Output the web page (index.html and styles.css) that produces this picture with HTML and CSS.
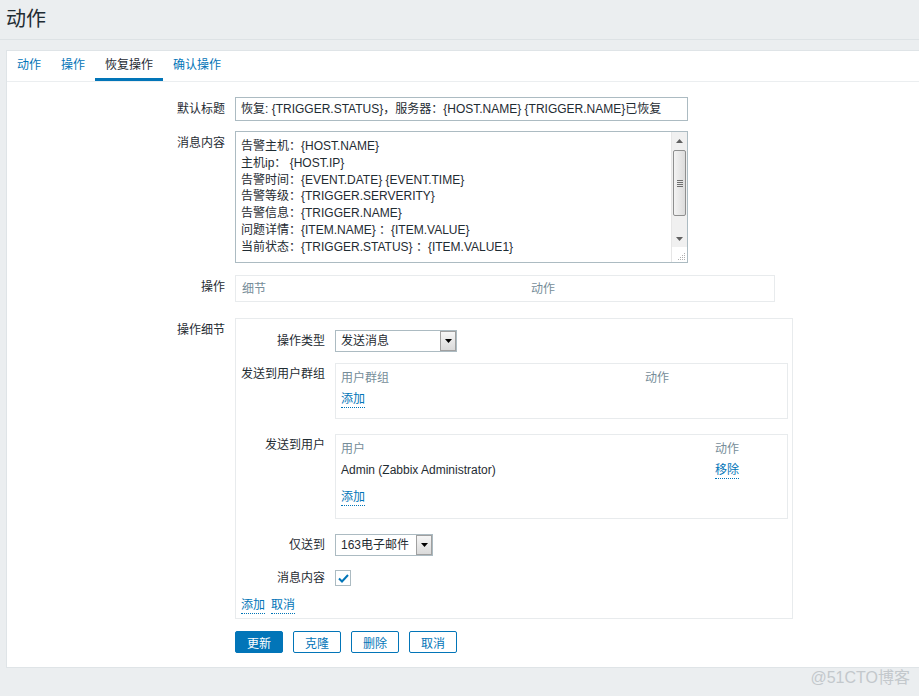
FILE: index.html
```html
<!DOCTYPE html>
<html lang="zh-CN">
<head>
<meta charset="utf-8">
<title>动作</title>
<link rel="stylesheet" href="styles.css">
</head>
<body>
<header class="page-header"><h1 class="page-title">动作</h1></header>
<main class="panel">
  <nav class="tabs">
    <a class="tab">动作</a>
    <a class="tab">操作</a>
    <a class="tab active">恢复操作</a>
    <a class="tab">确认操作</a>
  </nav>
  <div class="form">
    <div class="row row-title">
      <div class="label">默认标题</div>
      <div class="field"><div class="input input-title">恢复: {TRIGGER.STATUS}，服务器：{HOST.NAME} {TRIGGER.NAME}已恢复</div></div>
    </div>
    <div class="row row-msg">
      <div class="label">消息内容</div>
      <div class="field">
        <div class="textarea">
          <div class="ta-text">
            <div>告警主机：{HOST.NAME}</div>
            <div>主机ip： {HOST.IP}</div>
            <div>告警时间：{EVENT.DATE} {EVENT.TIME}</div>
            <div>告警等级：{TRIGGER.SERVERITY}</div>
            <div>告警信息：{TRIGGER.NAME}</div>
            <div>问题详情：{ITEM.NAME} ：{ITEM.VALUE}</div>
            <div>当前状态：{TRIGGER.STATUS} ：{ITEM.VALUE1}</div>
            <div>事件ID：{EVENT.ID}</div>
          </div>
          <div class="scrollbar">
            <div class="sb-btn sb-up"><svg width="7" height="4" viewBox="0 0 7 4"><path d="M0 4 L3.5 0 L7 4 Z" fill="#606060"/></svg></div>
            <div class="sb-track">
              <div class="sb-thumb"><span></span><span></span><span></span><span></span></div>
            </div>
            <div class="sb-btn sb-down"><svg width="7" height="4" viewBox="0 0 7 4"><path d="M0 0 L3.5 4 L7 0 Z" fill="#606060"/></svg></div>
            <div class="sb-corner"><svg width="8" height="8" viewBox="0 0 8 8"><g fill="#b0b0b0"><rect x="6" y="0" width="1" height="1"/><rect x="4" y="2" width="1" height="1"/><rect x="6" y="2" width="1" height="1"/><rect x="2" y="4" width="1" height="1"/><rect x="4" y="4" width="1" height="1"/><rect x="6" y="4" width="1" height="1"/><rect x="0" y="6" width="1" height="1"/><rect x="2" y="6" width="1" height="1"/><rect x="4" y="6" width="1" height="1"/><rect x="6" y="6" width="1" height="1"/></g></svg></div>
          </div>
        </div>
      </div>
    </div>
    <div class="row row-ops">
      <div class="label">操作</div>
      <div class="field">
        <div class="box ops-box">
          <div class="th-row"><span class="th col-detail">细节</span><span class="th">动作</span></div>
        </div>
      </div>
    </div>
    <div class="row row-details">
      <div class="label">操作细节</div>
      <div class="field">
        <div class="box details-box">
          <div class="irow irow-type">
            <div class="ilabel">操作类型</div>
            <div class="select select-type"><span class="sel-text">发送消息</span><span class="sel-btn"><svg width="7" height="4" viewBox="0 0 7 4"><path d="M0 0 L3.5 4 L7 0 Z" fill="#000"/></svg></span></div>
          </div>
          <div class="irow irow-groups">
            <div class="ilabel">发送到用户群组</div>
            <div class="box sub-box groups-box">
              <div class="th-row"><span class="th col-group">用户群组</span><span class="th">动作</span></div>
              <div class="tr add-row"><a class="link">添加</a></div>
            </div>
          </div>
          <div class="irow irow-users">
            <div class="ilabel">发送到用户</div>
            <div class="box sub-box users-box">
              <div class="th-row"><span class="th col-user">用户</span><span class="th">动作</span></div>
              <div class="tr user-row"><span class="col-user">Admin (Zabbix Administrator)</span><a class="link">移除</a></div>
              <div class="tr add-row add-user"><a class="link">添加</a></div>
            </div>
          </div>
          <div class="irow irow-media">
            <div class="ilabel">仅送到</div>
            <div class="select select-media"><span class="sel-text">163电子邮件</span><span class="sel-btn"><svg width="7" height="4" viewBox="0 0 7 4"><path d="M0 0 L3.5 4 L7 0 Z" fill="#000"/></svg></span></div>
          </div>
          <div class="irow irow-check">
            <div class="ilabel">消息内容</div>
            <div class="checkbox"><svg width="11" height="9" viewBox="0 0 11 9"><path d="M1 4.5 L4 7.5 L10 1" fill="none" stroke="#0275b8" stroke-width="2"/></svg></div>
          </div>
          <div class="detail-links"><a class="link">添加</a><a class="link">取消</a></div>
        </div>
      </div>
    </div>
    <div class="buttons">
      <button class="btn btn-primary">更新</button>
      <button class="btn">克隆</button>
      <button class="btn">删除</button>
      <button class="btn">取消</button>
    </div>
  </div>
</main>
<div class="watermark">@51CTO博客</div>
</body>
</html>
```
FILE: styles.css
```css
* { box-sizing: border-box; }
html, body { margin: 0; padding: 0; }
body {
  background: #ebeef0;
  font-family: "Liberation Sans", "Noto Sans CJK SC", sans-serif;
  font-size: 12px;
  color: #1f2c33;
  width: 919px;
  height: 696px;
  overflow: hidden;
  position: relative;
}
.page-header {
  height: 40px;
  border-bottom: 1px solid #dde2e5;
  padding-left: 6px;
}
.page-title {
  margin: 0;
  font-weight: normal;
  font-size: 20px;
  line-height: 39px;
}
.panel {
  margin: 10px 0 0 6px;
  background: #fff;
  border: 1px solid #dfe4e7;
  border-right: none;
  height: 618px;
}
.tabs {
  display: flex;
  height: 31px;
  border-bottom: 1px solid #ebeef0;
}
.tab {
  padding: 0 10px;
  height: 30px;
  line-height: 28px;
  color: #0275b8;
  border-bottom: 3px solid transparent;
}
.tab.active {
  color: #1f2c33;
  border-bottom-color: #0275b8;
}
.form { padding-top: 15px; }
.row { display: flex; align-items: flex-start; }
.label {
  width: 218px;
  text-align: right;
  line-height: 24px;
  flex: none;
}
.field { margin-left: 10px; }
.row-msg { margin-top: 10px; }
.row-ops { margin-top: 12px; }
.row-details { margin-top: 16px; }
.input {
  border: 1px solid #acbbc2;
  height: 24px;
  line-height: 22px;
  padding: 0 5px;
  white-space: nowrap;
}
.input-title { width: 453px; }
.textarea {
  width: 453px;
  height: 132px;
  border: 1px solid #acbbc2;
  display: flex;
  align-items: flex-start;
  overflow: hidden;
}
.ta-text {
  flex: 1;
  height: 125px;
  padding: 6px 5px 0;
  line-height: 16.8px;
  overflow: hidden;
  white-space: nowrap;
}
.scrollbar {
  width: 16px;
  height: 130px;
  flex: none;
  display: flex;
  flex-direction: column;
  background: #f0f0f0;
  border-left: 1px solid #e6e6e6;
}
.sb-btn {
  height: 17px;
  display: flex;
  align-items: center;
  justify-content: center;
}
.sb-track { height: 82px; padding: 1px 0; }
.sb-thumb {
  height: 66px;
  margin: 0 1px;
  border: 1px solid #8e8f8f;
  border-radius: 2px;
  background: linear-gradient(to right, #f3f3f3, #dcdcdc);
  display: flex;
  flex-direction: column;
  align-items: center;
  justify-content: center;
  gap: 1px;
}
.sb-thumb span { width: 6px; height: 1px; background: #707070; }
.sb-down { height: 16px; }
.sb-corner {
  flex: 1;
  background: #fff;
  display: flex;
  align-items: flex-end;
  justify-content: flex-end;
  padding: 0 1px 1px 0;
}
.box { border: 1px solid #e8ebed; }
.ops-box {
  width: 540px;
  height: 27px;
  padding: 3px 6px 0;
}
.th-row { display: flex; line-height: 20px; }
.th { color: #768d99; }
.col-detail { width: 289px; }
.details-box {
  width: 558px;
  height: 301px;
  padding: 11px 4px 0 5px;
}
.irow { display: flex; align-items: flex-start; }
.ilabel {
  width: 84px;
  flex: none;
  text-align: right;
  line-height: 22px;
  margin-right: 10px;
  white-space: nowrap;
}
.select {
  height: 22px;
  border: 1px solid #acbbc2;
  display: flex;
  align-items: stretch;
}
.sel-text { flex: 1; padding-left: 5px; line-height: 21px; white-space: nowrap; }
.sel-btn {
  width: 16px;
  border: 1px solid #a0a0a0;
  background: linear-gradient(#f6f6f6, #dadada);
  display: flex;
  align-items: center;
  justify-content: center;
}
.select-type { width: 122px; }
.select-media { width: 98px; }
.irow-groups { margin-top: 11px; }
.irow-users { margin-top: 15px; }
.irow-media { margin-top: 15px; }
.irow-check { margin-top: 11px; }
.sub-box {
  width: 453px;
  padding: 4px 5px 0;
}
.groups-box { height: 56px; }
.users-box { height: 85px; }
.col-group { width: 304px; }
.col-user { width: 374px; }
.tr { display: flex; line-height: 20px; }
.groups-box .add-row { margin-top: 3px; }
.user-row { margin-top: 1px; }
.add-user { margin-top: 9px; }
.link {
  color: #0275b8;
  border-bottom: 1px dotted #0275b8;
  line-height: 16px;
  display: inline-block;
  align-self: center;
}
.checkbox {
  margin-top: 3px;
  width: 16px;
  height: 16px;
  border: 1px solid #acbbc2;
  display: flex;
  align-items: center;
  justify-content: center;
}
.detail-links {
  margin-top: 8px;
  display: flex;
  gap: 6px;
  line-height: 20px;
  align-items: center;
}
.buttons {
  margin: 12px 0 0 228px;
  display: flex;
  gap: 10px;
}
.btn {
  width: 48px;
  height: 22px;
  padding: 0;
  font: inherit;
  border: 1px solid #0275b8;
  border-radius: 2px;
  background: #fff;
  color: #0275b8;
}
.btn-primary { background: #0275b8; color: #fff; }
.watermark {
  position: absolute;
  right: 9px;
  bottom: 8px;
  font-size: 16px;
  color: #c3c8cc;
}
```
